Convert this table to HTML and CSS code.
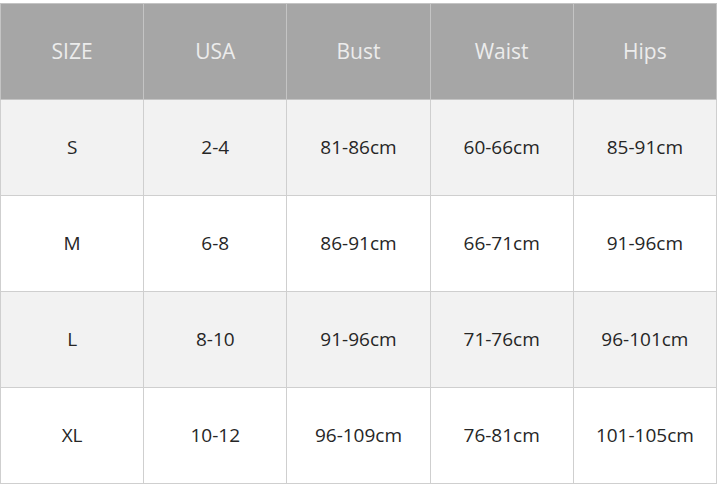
FILE: index.html
```html
<!DOCTYPE html>
<html>
<head>
<meta charset="utf-8">
<link rel="stylesheet" href="styles.css">
</head>
<body>
<table class="size-table">
  <thead>
    <tr><th>SIZE</th><th>USA</th><th>Bust</th><th>Waist</th><th>Hips</th></tr>
  </thead>
  <tbody>
    <tr class="alt"><td>S</td><td>2-4</td><td>81-86cm</td><td>60-66cm</td><td>85-91cm</td></tr>
    <tr><td>M</td><td>6-8</td><td>86-91cm</td><td>66-71cm</td><td>91-96cm</td></tr>
    <tr class="alt"><td>L</td><td>8-10</td><td>91-96cm</td><td>71-76cm</td><td>96-101cm</td></tr>
    <tr><td>XL</td><td>10-12</td><td>96-109cm</td><td>76-81cm</td><td>101-105cm</td></tr>
  </tbody>
</table>
</body>
</html>
```

FILE: styles.css
```css
html, body {
  margin: 0;
  padding: 0;
  background: #ffffff;
}
body {
  padding-top: 3px;
  font-family: "Open Sans", "Noto Sans", sans-serif;
}
.size-table {
  border-collapse: collapse;
  width: 717px;
  table-layout: fixed;
}
.size-table th,
.size-table td {
  border: 1px solid #cfcfcf;
  text-align: center;
  vertical-align: middle;
  height: 95px;
  padding: 0;
  line-height: 1;
}
.size-table th {
  background: #a6a6a6;
  color: #ececec;
  font-weight: 400;
  font-size: 21px;
  border-color: #c4c4c4;
}
.size-table td {
  color: #262626;
  font-size: 19px;
  background: #ffffff;
}
.size-table tr.alt td {
  background: #f2f2f2;
}
```
